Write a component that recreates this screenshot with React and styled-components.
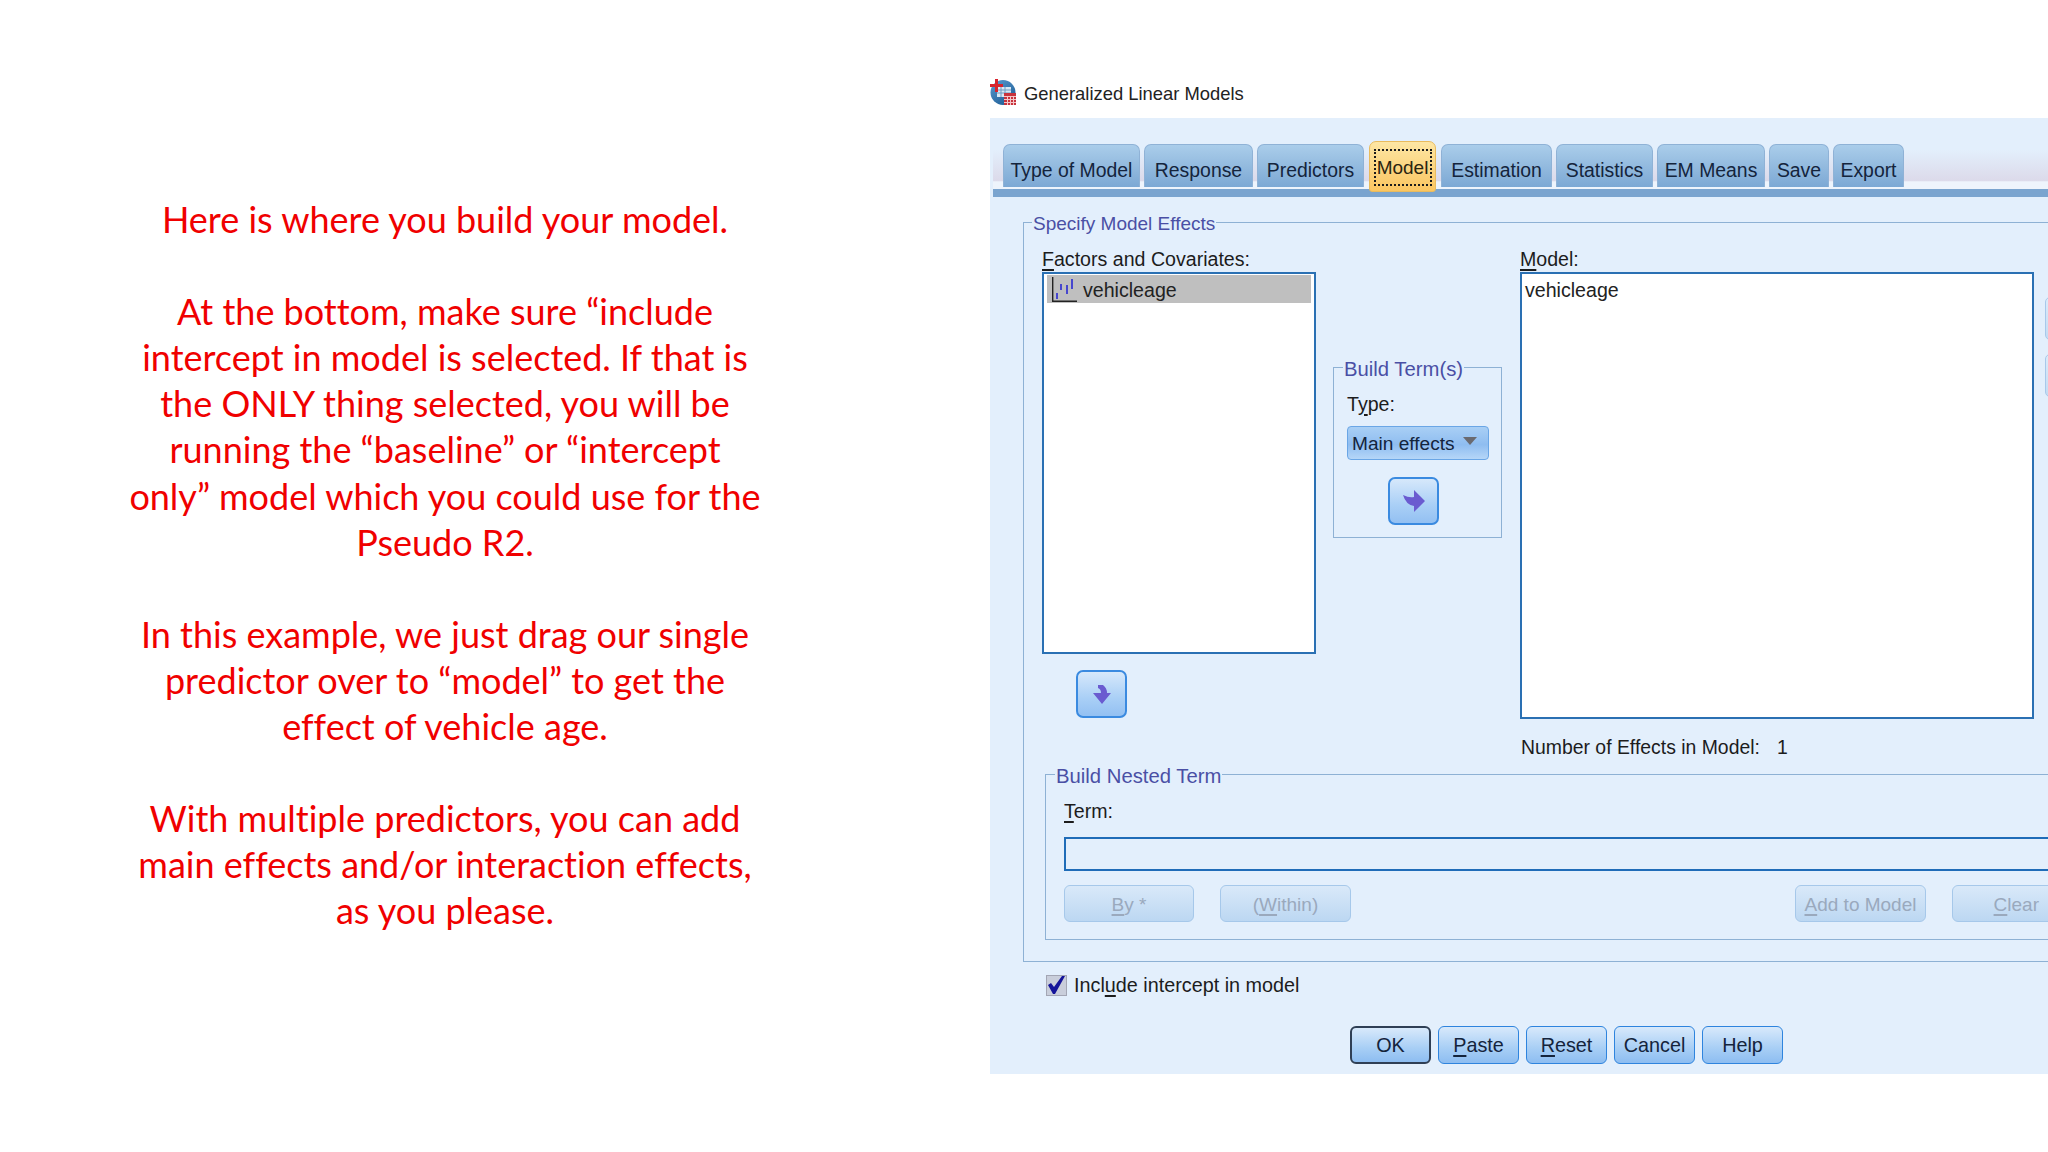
import React from "react";
import styled, { createGlobalStyle } from "styled-components";

const GlobalStyle = createGlobalStyle`
  html, body {
    margin: 0;
    padding: 0;
    background: #fff;
  }
  body {
    width: 2048px;
    height: 1152px;
    overflow: hidden;
    font-family: "Liberation Sans", Arial, sans-serif;
  }
  * {
    box-sizing: border-box;
  }
`;

const Page = styled.div`
  display: flex;
  width: 2048px;
  height: 1152px;
  overflow: hidden;
`;

const Notes = styled.div`
  width: 890px;
  margin-right: 100px;
  padding-top: 196px;
  color: #f00000;
  font-family: Lato, "Open Sans", sans-serif;
  font-size: 36px;
  font-variant-ligatures: none;
  line-height: 46.1px;
  text-align: center;
`;

const Note = styled.p`
  margin: 0 0 46.1px;
`;

const NoteLine = styled.span`
  display: block;
  white-space: nowrap;
`;

const DialogColumn = styled.div`
  flex: 1;
  min-width: 0;
  padding-top: 79px;
`;

const TitleBar = styled.div`
  display: flex;
  align-items: center;
  gap: 7px;
  height: 27px;
  margin-bottom: 12px;
  color: #222;
  font-size: 18.4px;
`;

const TitleText = styled.span`
  margin-top: 2px;
`;

const Panel = styled.div`
  height: 956px;
  background: #e3effc;
  overflow: hidden;
`;

const TabBar = styled.div`
  display: flex;
  align-items: flex-end;
  gap: 4px;
  height: 79px;
  margin-left: 3px;
  padding: 0 0 2px 10px;
  background: linear-gradient(#e3effc 45%, #dcdaea 88%, #eef4fc 90%);
  border-bottom: 8px solid #7aa4cf;
`;

const Tab = styled.div`
  display: flex;
  align-items: center;
  justify-content: center;
  flex: none;
  width: ${p => p.$w}px;
  height: 43px;
  padding-top: 9px;
  border: 1px solid #8fb2d6;
  border-bottom: none;
  border-radius: 7px 7px 0 0;
  background: linear-gradient(#aacdea, #7ca8d4);
  color: #14243c;
  font-size: 19.4px;
  white-space: nowrap;
`;

const ActiveTab = styled(Tab)`
  position: relative;
  height: 51px;
  margin: 0 1px -5px;
  padding: 3px 0 0;
  border: 1px solid #e9bb5e;
  border-radius: 7px 7px 3px 3px;
  background: linear-gradient(#fde6a4, #fbc661);
  color: #2a2410;
  font-size: 19px;
  &::after {
    content: "";
    position: absolute;
    inset: 7px 3px 5px 4px;
    border: 2px dotted #1c1c1c;
  }
`;

const Body = styled.div`
  padding: 14px 0 0 33px;
`;

const Group = styled.fieldset`
  width: ${p => p.$w}px;
  margin: ${p => p.$margin || 0};
  padding: ${p => p.$padding};
  border: 1.5px solid #8eb1d4;
  min-width: 0;
`;

const GroupTitle = styled.legend`
  height: 22px;
  margin-left: ${p => p.$indent}px;
  padding: 0 1px;
  color: #4a4fa5;
  font-size: ${p => p.$size || 20.3}px;
  line-height: 26px;
`;

const EffectsRow = styled.div`
  display: flex;
`;

const Column = styled.div`
  flex: none;
  width: ${p => p.$w}px;
  margin-right: ${p => p.$gap}px;
`;

const FieldLabel = styled.div`
  height: 25px;
  color: #1c1c1c;
  font-size: 19.6px;
  line-height: 24px;
  white-space: nowrap;
`;

const Mnemonic = styled.span`
  text-decoration: underline;
  text-decoration-thickness: 1.5px;
  text-underline-offset: 3px;
`;

const ListBox = styled.div`
  height: ${p => p.$h}px;
  padding: 1px 3px;
  border: 2px solid #2a70b3;
  background: #fff;
  color: #222;
  font-size: 19.6px;
`;

const ListRow = styled.div`
  display: flex;
  align-items: center;
  gap: 6px;
  height: 28px;
  padding-left: 5px;
  background: ${p => (p.$selected ? "#bfbfbf" : "transparent")};
`;

const ListText = styled.span`
  margin-top: 3px;
`;

const PlainRow = styled(ListRow)`
  padding-left: 0;
`;

const IconButton = styled.div`
  display: flex;
  align-items: center;
  justify-content: center;
  width: 51px;
  height: 48px;
  border: 2px solid #3a8ae0;
  border-radius: 7px;
  background: linear-gradient(#d6e8fb, #a9cff6 60%, #93c0f2);
`;

const MoveDownButton = styled(IconButton)`
  margin: 16px 0 0 34px;
`;

const BuildColumn = styled(Column)`
  padding-top: 109px;
`;

const TypeLabel = styled(FieldLabel)`
  height: 22px;
  margin-left: 13px;
  line-height: 22px;
`;

const Combo = styled.div`
  display: flex;
  align-items: center;
  justify-content: space-between;
  width: 142px;
  height: 34px;
  margin: 11px 0 0 13px;
  padding: 2px 11px 0 4px;
  border: 1px solid #6aa6e6;
  border-radius: 4px;
  background: linear-gradient(#a9cff5, #8fbdf0 55%, #b5d6f8);
  color: #14243c;
  font-size: 19.1px;
  &::after {
    content: "";
    margin-top: -6px;
    border-top: 8px solid #6a6a70;
    border-left: 7px solid transparent;
    border-right: 7px solid transparent;
  }
`;

const BuildButton = styled(IconButton)`
  margin: 17px 0 0 54px;
`;

const CountRow = styled.div`
  display: flex;
  gap: 17px;
  height: 22px;
  margin-top: 17px;
  padding-left: 1px;
  color: #1c1c1c;
  font-size: 19.4px;
  line-height: 22px;
`;

const SideButtons = styled.div`
  display: flex;
  flex-direction: column;
  gap: 14px;
  padding-top: 50px;
`;

const SideButton = styled.div`
  width: 40px;
  height: 43px;
  border: 1.5px solid #a8c8ea;
  border-radius: 5px;
  background: linear-gradient(#dcebfa, #c3dbf3);
`;

const TermInput = styled.div`
  width: 1100px;
  height: 34px;
  margin-top: 13px;
  border: 2px solid #1f6cb8;
`;

const NestedButtons = styled.div`
  display: flex;
  justify-content: space-between;
  width: 1018px;
  margin-top: 14px;
`;

const ButtonPair = styled.div`
  display: flex;
  gap: 26px;
`;

const DisabledButton = styled.div`
  display: flex;
  align-items: center;
  justify-content: ${p => (p.$end ? "flex-end" : "center")};
  width: ${p => p.$w || 130}px;
  height: 37px;
  padding: 2px ${p => (p.$end ? "42px" : 0)} 0 0;
  border: 1.5px solid #a6c8ea;
  border-radius: 6px;
  background: linear-gradient(#d9e9f9, #bcd7f2);
  color: #9aa9bd;
  font-size: 19px;
`;

const CheckRow = styled.div`
  display: flex;
  align-items: center;
  gap: 7px;
  height: 21px;
  margin: 13px 0 0 23px;
  color: #1c1c1c;
  font-size: 19.8px;
`;

const CheckBox = styled.div`
  flex: none;
  width: 21px;
  height: 21px;
  border: 1.5px solid #a3a6b4;
  background: #c9cedb;
`;

const Footer = styled.div`
  display: flex;
  gap: 7px;
  margin: 30px 0 0 327px;
`;

const ActionButton = styled.div`
  display: flex;
  align-items: center;
  justify-content: center;
  width: 81px;
  height: 38px;
  padding-top: 1px;
  border: ${p => (p.$primary ? "2px solid #2f3f55" : "1.5px solid #2e84de")};
  border-radius: 6px;
  background: linear-gradient(#d8e9fb, #a7cef5 60%, #8dbdf1);
  color: #14243c;
  font-size: 19.8px;
`;

const AppIcon = () => (
  <svg width="27" height="27" viewBox="0 0 27 27">
    <defs>
      <linearGradient id="globe" x1="0" y1="0" x2="0.7" y2="1">
        <stop offset="0" stopColor="#5b9bd0" />
        <stop offset="1" stopColor="#1f5f97" />
      </linearGradient>
    </defs>
    <circle cx="13" cy="13.5" r="12.5" fill="url(#globe)" />
    <rect x="7" y="8" width="14" height="10" fill="#d9e8f4" />
    <path d="M7 11h14M7 14h14M11 8v10M15 8v10" stroke="#6f9cc2" strokeWidth="1" />
    <path d="M5 0h3v5h5v3H8v5H5V8H0V5h5z" fill="#d8232c" />
    <rect x="14" y="14" width="12" height="12" fill="#c8333c" />
    <path d="M14 17.5h12M14 20.5h12M14 23.5h12M17.5 17v9M20.5 17v9M23.5 17v9" stroke="#f4c6c8" strokeWidth="1" />
  </svg>
);

const ScaleIcon = () => (
  <svg width="25" height="25" viewBox="0 0 25 25">
    <path d="M.7 0v24.3H25" fill="none" stroke="#222" strokeWidth="1.4" />
    <path d="M5 16v6M9 7v6M15 8v9M20 2v10" stroke="#2a2ad2" strokeWidth="1.6" fill="none" />
  </svg>
);

const DownArrow = () => (
  <svg width="18" height="19" viewBox="0 0 18 19">
    <path d="M0 8h18L9 19zM5 0h5q4 3 4 8H8q0-4-3-5z" fill="#6a5bd0" />
  </svg>
);

const RightArrow = () => (
  <svg width="22" height="22" viewBox="0 0 22 22">
    <path d="M11 0l11 11-11 11v-6Q3 15 0 5q6 3 11 2z" fill="#6a5bd0" />
  </svg>
);

const CheckMark = () => (
  <svg width="18" height="18" viewBox="0 0 18 18">
    <path d="M1 9l3-2 3 4L15 0h3L8 18H6z" fill="#14149a" />
  </svg>
);

const tabs = [
  ["Type of Model", 137],
  ["Response", 109],
  ["Predictors", 107],
  ["Model", 67, true],
  ["Estimation", 111],
  ["Statistics", 97],
  ["EM Means", 108],
  ["Save", 60],
  ["Export", 71]
];

const notes = [
  ["Here is where you build your model."],
  [
    "At the bottom, make sure \u201Cinclude",
    "intercept in model is selected. If that is",
    "the ONLY thing selected, you will be",
    "running the \u201Cbaseline\u201D or \u201Cintercept",
    "only\u201D model which you could use for the",
    "Pseudo R2."
  ],
  [
    "In this example, we just drag our single",
    "predictor over to \u201Cmodel\u201D to get the",
    "effect of vehicle age."
  ],
  [
    "With multiple predictors, you can add",
    "main effects and/or interaction effects,",
    "as you please."
  ]
];

const App = () => (
  <Page>
    <GlobalStyle />
    <Notes>
      {notes.map((lines, i) => (
        <Note key={i}>
          {lines.map(line => (
            <NoteLine key={line}>{line}</NoteLine>
          ))}
        </Note>
      ))}
    </Notes>
    <DialogColumn>
      <TitleBar>
        <AppIcon />
        <TitleText>Generalized Linear Models</TitleText>
      </TitleBar>
      <Panel>
        <TabBar>
          {tabs.map(([label, w, active]) =>
            active ? (
              <ActiveTab key={label} $w={w}>{label}</ActiveTab>
            ) : (
              <Tab key={label} $w={w}>{label}</Tab>
            )
          )}
        </TabBar>
        <Body>
          <Group $w={1200} $padding="14px 0 21px 18px">
            <GroupTitle $indent={-10} $size={19}>Specify Model Effects</GroupTitle>
            <EffectsRow>
              <Column $w={274} $gap={17}>
                <FieldLabel><Mnemonic>F</Mnemonic>actors and Covariates:</FieldLabel>
                <ListBox $h={382}>
                  <ListRow $selected>
                    <ScaleIcon />
                    <ListText>vehicleage</ListText>
                  </ListRow>
                </ListBox>
                <MoveDownButton><DownArrow /></MoveDownButton>
              </Column>
              <BuildColumn $w={169} $gap={18}>
                <Group $w={169} $padding="15px 0 12px 0">
                  <GroupTitle $indent={9}>Build Term(s)</GroupTitle>
                  <TypeLabel>T<Mnemonic>y</Mnemonic>pe:</TypeLabel>
                  <Combo>Main effects</Combo>
                  <BuildButton><RightArrow /></BuildButton>
                </Group>
              </BuildColumn>
              <Column $w={514} $gap={11}>
                <FieldLabel><Mnemonic>M</Mnemonic>odel:</FieldLabel>
                <ListBox $h={447}>
                  <PlainRow><ListText>vehicleage</ListText></PlainRow>
                </ListBox>
                <CountRow>
                  <span>Number of Effects in Model:</span>
                  <span>1</span>
                </CountRow>
              </Column>
              <SideButtons>
                <SideButton />
                <SideButton />
              </SideButtons>
            </EffectsRow>
            <Group $w={1100} $margin="5px 0 0 3px" $padding="14px 0 17px 18px">
              <GroupTitle $indent={-9}>Build Nested Term</GroupTitle>
              <FieldLabel><Mnemonic>T</Mnemonic>erm:</FieldLabel>
              <TermInput />
              <NestedButtons>
                <ButtonPair>
                  <DisabledButton><Mnemonic>B</Mnemonic>y *</DisabledButton>
                  <DisabledButton $w={131}>(<Mnemonic>W</Mnemonic>ithin)</DisabledButton>
                </ButtonPair>
                <ButtonPair>
                  <DisabledButton $w={131}><Mnemonic>A</Mnemonic>dd to Model</DisabledButton>
                  <DisabledButton $end><Mnemonic>C</Mnemonic>lear</DisabledButton>
                </ButtonPair>
              </NestedButtons>
            </Group>
          </Group>
          <CheckRow>
            <CheckBox><CheckMark /></CheckBox>
            <span>Incl<Mnemonic>u</Mnemonic>de intercept in model</span>
          </CheckRow>
          <Footer>
            <ActionButton $primary>OK</ActionButton>
            <ActionButton><Mnemonic>P</Mnemonic>aste</ActionButton>
            <ActionButton><Mnemonic>R</Mnemonic>eset</ActionButton>
            <ActionButton>Cancel</ActionButton>
            <ActionButton>Help</ActionButton>
          </Footer>
        </Body>
      </Panel>
    </DialogColumn>
  </Page>
);

export default App;
